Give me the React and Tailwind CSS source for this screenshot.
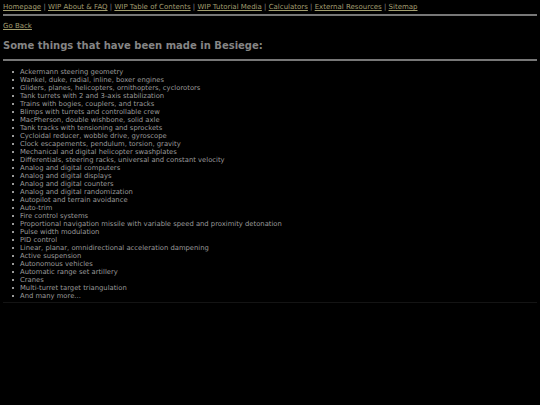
const navLinks = [
  "Homepage",
  "WIP About & FAQ",
  "WIP Table of Contents",
  "WIP Tutorial Media",
  "Calculators",
  "External Resources",
  "Sitemap",
];

const things = [
  "Ackermann steering geometry",
  "Wankel, duke, radial, inline, boxer engines",
  "Gliders, planes, helicopters, ornithopters, cyclorotors",
  "Tank turrets with 2 and 3-axis stabilization",
  "Trains with bogies, couplers, and tracks",
  "Blimps with turrets and controllable crew",
  "MacPherson, double wishbone, solid axle",
  "Tank tracks with tensioning and sprockets",
  "Cycloidal reducer, wobble drive, gyroscope",
  "Clock escapements, pendulum, torsion, gravity",
  "Mechanical and digital helicopter swashplates",
  "Differentials, steering racks, universal and constant velocity",
  "Analog and digital computers",
  "Analog and digital displays",
  "Analog and digital counters",
  "Analog and digital randomization",
  "Autopilot and terrain avoidance",
  "Auto-trim",
  "Fire control systems",
  "Proportional navigation missile with variable speed and proximity detonation",
  "Pulse width modulation",
  "PID control",
  "Linear, planar, omnidirectional acceleration dampening",
  "Active suspension",
  "Autonomous vehicles",
  "Automatic range set artillery",
  "Cranes",
  "Multi-turret target triangulation",
  "And many more...",
];

export default function App() {
  return (
    <div
      className="min-h-[405px] bg-black px-[3px] pt-[3px] text-[#9a9a9a]"
      style={{ fontFamily: '"DejaVu Sans", Verdana, sans-serif' }}
    >
      {/* Nav */}
      <div className="h-[9px] text-[7px] leading-[9px] whitespace-nowrap">
        {navLinks.map((link, i) => (
          <span key={link}>
            {i > 0 && <span className="text-[#888]"> | </span>}
            <a href="#" className="text-[#a39f70] underline">
              {link}
            </a>
          </span>
        ))}
      </div>
      <div className="mt-[2px] h-[2px] bg-[#777]" />

      <div className="mt-[6px] h-[8px] text-[7px] leading-[8px]">
        <a href="#" className="text-[#a39f70] underline">
          Go Back
        </a>
      </div>

      <h1 className="mt-[9px] h-[13px] text-[10px] font-bold leading-[13px] text-[#858585]">
        Some things that have been made in Besiege:
      </h1>
      <div className="mt-[7px] h-[2px] bg-[#777]" />

      {/* List */}
      <ul className="mt-[7px] text-[6.8px] leading-[8px]">
        {things.map((t) => (
          <li key={t} className="flex items-center">
            <span className="ml-[9px] mr-[6px] h-[2px] w-[2px] bg-[#999]" />
            <span>{t}</span>
          </li>
        ))}
      </ul>
      <div className="mt-[2px] h-[1px] bg-[#141414]" />
    </div>
  );
}
